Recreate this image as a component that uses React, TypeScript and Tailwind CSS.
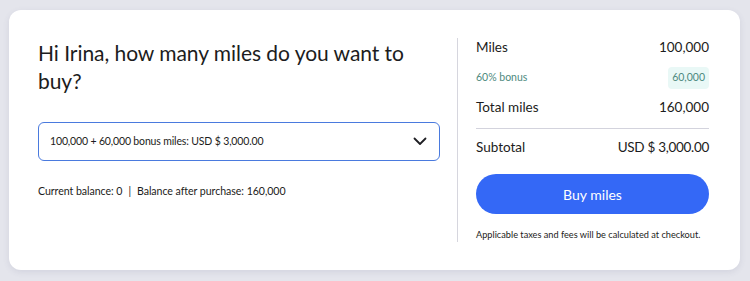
import React from 'react';

const font = { fontFamily: 'Lato, "Open Sans", sans-serif' };

function Chevron() {
  return (
    <svg width="14" height="9" viewBox="0 0 14 9" fill="none">
      <path d="M1.5 1.5 L7 7 L12.5 1.5" stroke="#1f1f24" strokeWidth="1.8" strokeLinecap="round" strokeLinejoin="round" />
    </svg>
  );
}

export default function App() {
  return (
    <div className="w-[750px] h-[281px] bg-[#e4e5ec] pt-[10px] pl-[9px]" style={font}>
      <div className="w-[731px] h-[260px] bg-white rounded-[12px] shadow-[0_2px_6px_rgba(80,80,120,0.12)] flex pt-[28px] pl-[29px] pr-[31px]">
        {/* Left: selection */}
        <div className="w-[402px] h-[204px] flex flex-col text-[#1c1c20]">
          <h1 className="text-[21px] leading-[28px] mt-[1px] tracking-[-0.05px]">
            Hi Irina, how many miles do you want to buy?
          </h1>
          <div className="mt-[27px] h-[39px] rounded-[6px] border-[1.5px] border-[#4a7ade] flex items-center justify-between pl-[11px] pr-[12px]">
            <span className="text-[10.5px] tracking-[-0.15px]">100,000 + 60,000 bonus miles: USD $ 3,000.00</span>
            <Chevron />
          </div>
          <div className="mt-[23px] text-[10.6px] tracking-[-0.05px] flex items-center gap-[6px]">
            <span>Current balance: 0</span>
            <span>|</span>
            <span>Balance after purchase: 160,000</span>
          </div>
        </div>

        {/* Right: summary */}
        <div className="ml-[17px] h-[204px] border-l border-[#d6d6de] pl-[18px] flex-1 flex flex-col text-[#1c1c20]">
          <div className="flex justify-between items-center h-[20px] text-[13.5px] mt-[-1px]">
            <span>Miles</span>
            <span>100,000</span>
          </div>
          <div className="flex justify-between items-center mt-[10px] text-[10.5px] text-[#4e8a7e]">
            <span>60% bonus</span>
            <span className="bg-[#e9f8f6] rounded-[4px] px-[4px] h-[22px] flex items-center">60,000</span>
          </div>
          <div className="flex justify-between items-center h-[20px] text-[13.5px] mt-[8px]">
            <span>Total miles</span>
            <span>160,000</span>
          </div>
          <div className="border-t border-[#d3d3dd] mt-[11px]" />
          <div className="flex justify-between items-center h-[20px] text-[13.5px] mt-[8px]">
            <span>Subtotal</span>
            <span className="tracking-[-0.3px]">USD $ 3,000.00</span>
          </div>
          <button className="mt-[17px] h-[40px] rounded-full bg-[#3468f6] text-white text-[14px]">
            Buy miles
          </button>
          <p className="mt-[14px] text-[9.2px]">Applicable taxes and fees will be calculated at checkout.</p>
        </div>
      </div>
    </div>
  );
}
